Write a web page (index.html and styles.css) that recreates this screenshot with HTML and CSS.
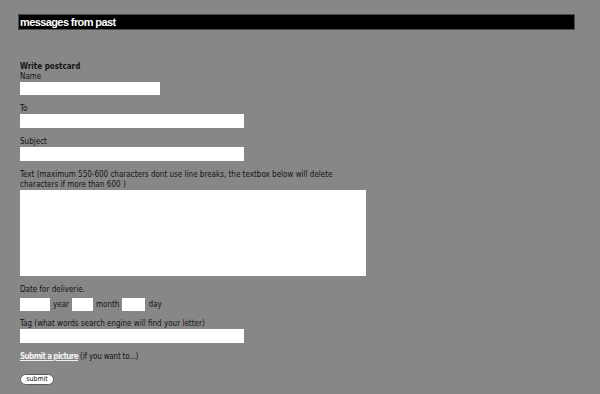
FILE: index.html
```html
<!DOCTYPE html>
<html>
<head>
<meta charset="utf-8">
<link rel="stylesheet" href="styles.css">
</head>
<body>
<div class="header">messages from past</div>
<form class="form">
  <div class="title">Write postcard</div>
  <div class="label">Name</div>
  <input class="field w-name first" type="text">
  <div class="label gap">To</div>
  <input class="field w-wide" type="text">
  <div class="label gap">Subject</div>
  <input class="field w-wide" type="text">
  <div class="label gap">Text (maximum 550-600 characters dont use line breaks, the textbox below will delete<br>characters if more than 600 )</div>
  <textarea class="area"></textarea>
  <div class="label gap">Date for deliverie.</div>
  <div class="date">
    <input class="field w-year" type="text"><span>year</span>
    <input class="field w-small" type="text"><span>month</span>
    <input class="field w-day" type="text"><span>day</span>
  </div>
  <div class="label gap-tag">Tag (what words search engine will find your letter)</div>
  <input class="field w-wide" type="text">
  <div class="label pic"><a href="#" class="link">Submit a picture</a> (if you want to...)</div>
  <button type="button" class="btn">submit</button>
</form>
</body>
</html>
```
FILE: styles.css
```css
html, body {
  margin: 0;
  padding: 0;
  background: #878787;
}
body {
  padding: 14px 0 0 18px;
  font-family: "DejaVu Sans Condensed", "DejaVu Sans", Verdana, sans-serif;
  font-stretch: condensed;
  font-size: 8px;
  color: #141414;
}
.header {
  box-sizing: border-box;
  background: #000;
  border: 1px solid #4a4a4a;
  height: 16px;
  line-height: 14px;
  color: #fff;
  font-family: "Liberation Sans", Arial, sans-serif;
  font-weight: bold;
  font-size: 11px;
  letter-spacing: -0.6px;
  padding-left: 1px;
  width: 557px;
}
.form {
  display: flex;
  flex-direction: column;
  align-items: flex-start;
  padding-left: 2px;
  margin-top: 32px;
}
.title {
  font-weight: bold;
  line-height: 10px;
}
.label {
  line-height: 10px;
}
.gap {
  margin-top: 9px;
}
.gap-tag {
  margin-top: 8px;
}
.field {
  border: none;
  background: #fff;
  height: 14px;
  padding: 0;
  margin: 0;
  box-sizing: border-box;
}
.first { height: 13px; }
.w-name { width: 140px; }
.w-wide { width: 224px; }
.w-year { width: 30px; height: 13px; }
.w-small { width: 21px; height: 13px; }
.w-day { width: 23px; height: 13px; }
.area {
  display: block;
  width: 346px;
  height: 86px;
  border: none;
  background: #fff;
  margin: 0;
  padding: 0;
  box-sizing: border-box;
  resize: none;
}
.date {
  display: flex;
  align-items: center;
  gap: 3px;
  margin-top: 3px;
}
.date span { line-height: 10px; }
.pic {
  margin-top: 9px;
  letter-spacing: -0.2px;
}
.link {
  color: #f2f2f2;
  font-weight: bold;
  letter-spacing: -0.6px;
  text-decoration: underline;
}
.btn {
  margin-top: 12px;
  width: 34px;
  height: 11px;
  border: 1px solid #5a5a5a;
  border-radius: 6px;
  background: #fff;
  font-family: "DejaVu Sans Condensed", "DejaVu Sans", Verdana, sans-serif;
  font-stretch: condensed;
  font-size: 7px;
  padding: 0;
  line-height: 9px;
  color: #111;
}
```
